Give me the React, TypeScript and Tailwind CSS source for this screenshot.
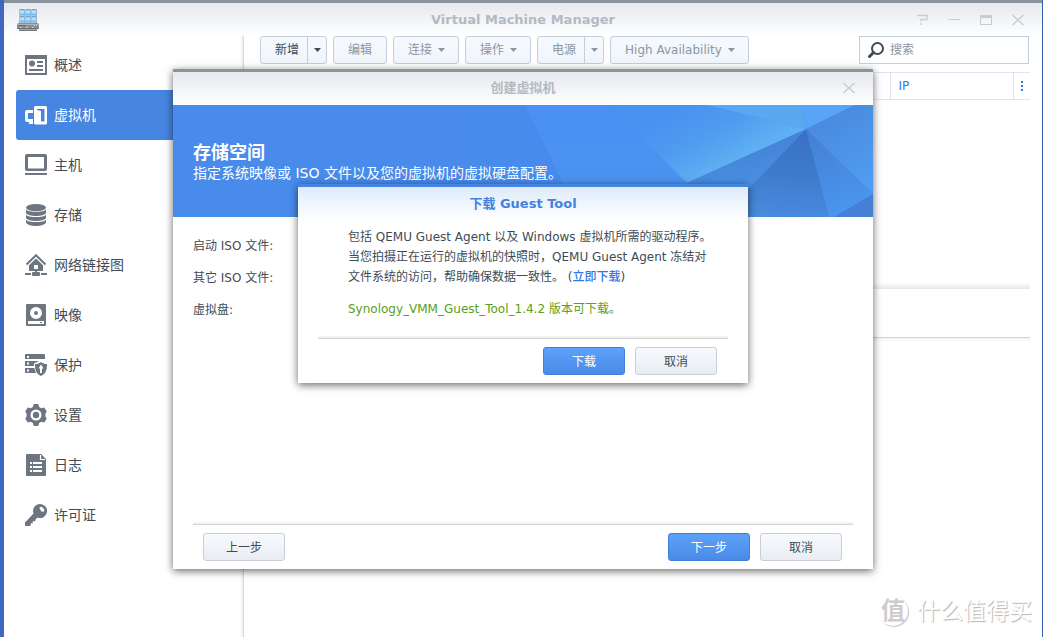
import { useState } from 'react';
import type { ReactNode } from 'react';

type NavItem = {
  label: string;
  icon: ReactNode;
};

const navItems: NavItem[] = [
  {
    label: '概述',
    icon: (
      <>
        <path fillRule="evenodd" d="M0 1h22v20H0zM2 5v14h18V5z" />
        <circle cx="7" cy="9.500" r="3" />
        <path d="M12 7h6v2h-6zM12 11h6v2h-6zM4 15h14v2H4z" />
      </>
    ),
  },
  {
    label: '虚拟机',
    icon: (
      <>
        <path d="M2 6h6v3H3v6h5v3H2a2 2 0 0 1-2-2V8a2 2 0 0 1 2-2zM4 18h4v2H4z" />
        <path
          fillRule="evenodd"
          d="M10.500 2H20.500a1.500 1.500 0 0 1 1.500 1.500V19a1.500 1.500 0 0 1-1.500 1.500H10.500A1.500 1.500 0 0 1 9 19V3.500A1.500 1.500 0 0 1 10.500 2zM12 5v1l4 1v10.500h3.500V5z"
        />
      </>
    ),
  },
  {
    label: '主机',
    icon: (
      <path
        fillRule="evenodd"
        d="M2 0h18a2 2 0 0 1 2 2v13a2 2 0 0 1-2 2H2a2 2 0 0 1-2-2V2a2 2 0 0 1 2-2zM3 3v11.500h16V3zM0 19h22v2H0z"
      />
    ),
  },
  {
    label: '存储',
    icon: (
      <>
        <ellipse cx="11" cy="3.600" rx="10" ry="3.600" />
        <path d="M1 5.500c2 3.200 18 3.200 20 0V9c-1.500 4-18.500 4-20 0z" />
        <path d="M1 10.700c2 3.200 18 3.200 20 0V14c-1.500 4-18.500 4-20 0z" />
        <path d="M1 15.700c2 3.200 18 3.200 20 0v2.500c-1.500 5-18.500 5-20 0z" />
      </>
    ),
  },
  {
    label: '网络链接图',
    icon: (
      <>
        <path d="M1.500 10.500 11 1.200l9.500 9.300" fill="none" stroke="currentColor" strokeWidth="2" />
        <path fillRule="evenodd" d="M11 4.500 18 11.300V17H4v-5.700zM9 11v4h4v-4z" />
        <path d="M0 19h6v2H0zM16 19h6v2h-6zM8 18h6a1 1 0 0 1 1 1v2a1 1 0 0 1-1 1H8a1 1 0 0 1-1-1v-2a1 1 0 0 1 1-1z" />
        <path d="M10 16h2v3h-2z" />
      </>
    ),
  },
  {
    label: '映像',
    icon: (
      <>
        <path
          fillRule="evenodd"
          d="M2 0h18a1 1 0 0 1 1 1v20a1 1 0 0 1-1 1H2a1 1 0 0 1-1-1V1a1 1 0 0 1 1-1zM11 3a6 6 0 1 0 0 12 6 6 0 0 0 0-12zM3 17v3h16v-3z"
        />
        <circle cx="11" cy="9" r="2" />
        <path d="M15 18h2v1h-2z" />
      </>
    ),
  },
  {
    label: '保护',
    icon: (
      <>
        <path
          fillRule="evenodd"
          d="M1 0h18a1 1 0 0 1 1 1v4H0V1a1 1 0 0 1 1-1zM2 2v2h2V2zM0 7h14l-5 2.500V12H0zM2 8.500v2h2v-2zM0 14h9.300l1.700 5H1a1 1 0 0 1-1-1zM2 15.500v2h2v-2z"
        />
        <path
          fillRule="evenodd"
          d="M16 8c2 1.500 4 2 6 2 0 6-1 9.500-6 12-5-2.500-6-6-6-12 2 0 4-.5 6-2zM16 10.500l-2.500 4H15V19h2v-4.500h1.500z"
        />
      </>
    ),
  },
  {
    label: '设置',
    icon: (
      <>
        <path
          fillRule="evenodd"
          strokeLinejoin="round"
          d="M8.700 0h4.600l.8 2.900 2.300 1.300 2.900-.8L21.800 7.500 20.400 9.600v2.800l1.400 2.100-2.500 4.100-2.900-.8-2.300 1.300-.8 2.900H8.700l-.8-2.900-2.300-1.300-2.900.8L.2 14.500l1.400-2.100V9.600L.2 7.500l2.500-4.100 2.900.8 2.300-1.300zM11 5.500a5.500 5.500 0 1 0 0 11 5.500 5.500 0 0 0 0-11z"
        />
        <circle cx="11" cy="11" r="3.200" />
      </>
    ),
  },
  {
    label: '日志',
    icon: (
      <>
        <path
          fillRule="evenodd"
          d="M2 0h14l5 5v16a1 1 0 0 1-1 1H2a1 1 0 0 1-1-1V1a1 1 0 0 1 1-1zM5 8v2h2V8zM8 8v2h9V8zM5 12v2h2v-2zM8 12v2h9v-2zM5 16v2h2v-2zM8 16v2h9v-2z"
        />
        <path d="M15.500 1v4.500H20" fill="none" stroke="#fff" strokeWidth="1.200" />
      </>
    ),
  },
  {
    label: '许可证',
    icon: (
      <path
        fillRule="evenodd"
        d="M15 0a7 7 0 1 1-2.500 13.500L10.500 15.500l-.5 2-1.500-.5-1 1 .5 1.500-1.500-.5-1 1 .5 1-1.200 1H0v-3.500L8.500 9.500A7 7 0 0 1 15 0zM14.500 4.500a1.800 1.800 0 0 1 2.500-1.500l2 2a1.800 1.800 0 0 1-2.500 2.500z"
      />
    ),
  },
];

function Caret() {
  return (
    <svg className="h-1 w-[7px]" viewBox="0 0 7 4" fill="currentColor" aria-hidden="true">
      <path d="M0 0h7L3.500 4z" />
    </svg>
  );
}

function CloseIcon() {
  return (
    <svg className="size-3" viewBox="0 0 12 12" fill="none" stroke="currentColor" strokeWidth="1.500" aria-hidden="true">
      <path d="M.5 1l11 10M11.500 1l-11 10" />
    </svg>
  );
}

function AppLogo() {
  return (
    <svg className="h-6 w-[22px]" viewBox="0 0 22 24" aria-hidden="true">
      <path d="M2 1h18v16H2z" fill="#9cc8ec" />
      {[2, 8, 14].map((x) => (
        <g key={x}>
          <path d={`M${x + 1} 1h4v1h-4zM${x + 1} 8h4v1h-4z`} fill="#7fa3c8" />
          <path d={`M${x + 1} 3h4v2h-4zM${x + 1} 10h4v2h-4z`} fill="#b4e2f8" />
          <path d={`M${x + 5} 2h1v14h-1z`} fill="#86b9e4" />
          <path d={`M${x} 6h6v1H${x}zM${x} 13h6v1H${x}z`} fill="#86b9e4" />
        </g>
      ))}
      <path d="M1 15h20l1 2v4H0v-4z" fill="#8c8e90" />
      <path d="M1 16h20v1H1z" fill="#b0b2b4" />
      <path d="M1 17h8v1H1zM1 20h20v1H1z" fill="#68696b" />
      <path d="M17 17h1v1h-1zM19 17h1v1h-1z" fill="#d5d94a" />
      <path d="M3 19h2v1H3zM9 19h2v1H9zM15 19h2v1h-2z" fill="#c8cacc" />
      <path d="M2 21h18v2H2z" fill="#a4a6a9" />
      <path d="M2 22h18v1H2z" fill="#76787b" />
    </svg>
  );
}

function BannerArt() {
  return (
    <svg
      className="absolute inset-0 size-full"
      viewBox="0 0 700 112"
      preserveAspectRatio="xMaxYMid slice"
      aria-hidden="true"
    >
      <defs>
        <linearGradient id="fadeIn" x1="0" x2="1" y1="0" y2="0">
          <stop offset="0" stopColor="#488bea" />
          <stop offset="1" stopColor="#478bf0" />
        </linearGradient>
        <linearGradient id="panel" x1="0" x2="0" y1="0" y2="1">
          <stop offset="0" stopColor="#4a90f6" />
          <stop offset="1" stopColor="#4c94ec" />
        </linearGradient>
        <linearGradient id="glow" gradientUnits="userSpaceOnUse" x1="520" x2="560" y1="-10" y2="66">
          <stop offset="0.100" stopColor="#4a92f0" />
          <stop offset="0.500" stopColor="#509cf0" />
          <stop offset="1" stopColor="#62b4f3" />
        </linearGradient>
        <linearGradient id="top" x1="0" x2="1" y1="0" y2="0">
          <stop offset="0" stopColor="#5aa6f8" />
          <stop offset="1" stopColor="#5aa9ec" />
        </linearGradient>
        <linearGradient id="right" x1="0" x2="0.500" y1="0" y2="1">
          <stop offset="0" stopColor="#4787da" />
          <stop offset="1" stopColor="#509aef" />
        </linearGradient>
        <linearGradient id="lower" x1="0" x2="0.300" y1="0" y2="1">
          <stop offset="0" stopColor="#437fd0" />
          <stop offset="1" stopColor="#4b94ee" />
        </linearGradient>
        <linearGradient id="dark" x1="0.500" x2="0.400" y1="0" y2="1">
          <stop offset="0" stopColor="#3a70c4" />
          <stop offset="0.500" stopColor="#3f7bcd" />
          <stop offset="1" stopColor="#498bde" />
        </linearGradient>
        <linearGradient id="mid" x1="0.500" x2="0.800" y1="0.300" y2="1">
          <stop offset="0" stopColor="#4484d9" />
          <stop offset="1" stopColor="#509aea" />
        </linearGradient>
      </defs>
      <path d="M0 0h700v112H0z" fill="#488bea" />
      <path d="M290 0h62l55 112H290z" fill="url(#fadeIn)" />
      <path d="M352 0h84l78 78-75 34h-32z" fill="url(#panel)" />
      <path d="M436 0h98l99 24-119 54z" fill="url(#glow)" />
      <path d="M534 0h93l6 24z" fill="url(#top)" />
      <path d="M627 0h55l-49 24z" fill="#58a4f6" />
      <path d="M682 0h18v89l-67-65z" fill="url(#right)" />
      <path d="M633 24l67 65-39 23h-5z" fill="url(#lower)" />
      <path d="M700 89v23h-39z" fill="#4480d4" />
      <path d="M633 24l23 88H548z" fill="url(#dark)" />
      <path d="M633 24l-85 88H439l75-34z" fill="url(#mid)" />
    </svg>
  );
}

function ToolButton({ label, menu = false }: { label: string; menu?: boolean }) {
  return (
    <button
      type="button"
      className={`flex h-7 items-center gap-1.5 rounded-[3px] border border-[#c3cfdd] bg-linear-to-b from-[#f6fafe] to-[#f0f5fb] pl-3.5 text-[#8d959f] ${
        menu ? 'pr-[13px]' : 'pr-3.5'
      }`}
    >
      {label}
      {menu && <Caret />}
    </button>
  );
}

function SplitButton({ label, strong = false }: { label: string; strong?: boolean }) {
  return (
    <div
      className={`flex h-7 rounded-[3px] border border-[#c3cfdd] bg-linear-to-b from-[#f6fafe] to-[#f0f5fb] ${
        strong ? 'text-[#414b55]' : 'text-[#8d959f]'
      }`}
    >
      <button type="button" className="pr-2 pl-3.5">
        {label}
      </button>
      <button
        type="button"
        aria-label={`${label}菜单`}
        className="flex w-[19px] items-center justify-center border-l border-[#c3cfdd]"
      >
        <Caret />
      </button>
    </div>
  );
}

function DialogButton({ label, primary = false, onClick }: { label: string; primary?: boolean; onClick?: () => void }) {
  return (
    <button
      type="button"
      onClick={onClick}
      className={`h-7 w-[82px] rounded-[3px] border pt-0.5 ${
        primary
          ? 'border-[#3f7fd6] bg-linear-to-b from-[#5ca2fa] to-[#4a8ae6] text-white'
          : 'border-[#c5ced9] bg-linear-to-b from-[#f7fbff] to-[#e9edf3] text-[#414b55]'
      }`}
    >
      {label}
    </button>
  );
}

function Divider() {
  return <div className="h-1 border-b border-[#d4d4d4] bg-linear-to-b from-white to-[#ececec]" />;
}

function GuestToolDialog({ onClose }: { onClose: () => void }) {
  return (
    <div
      role="dialog"
      aria-labelledby="guest-title"
      className="w-full max-w-[450px] border-t-3 border-[#4584e0] bg-white shadow-[0_2px_8px_rgba(0,0,0,0.6)]"
    >
      <h2
        id="guest-title"
        className="h-[33px] bg-linear-to-b from-[#deebfa] to-white text-center text-[13px] leading-[33px] font-bold text-[#4382de]"
      >
        下载 Guest Tool
      </h2>
      <div className="px-5">
        <div className="px-[30px] pt-[7px] pb-4 leading-5">
          <p className="whitespace-nowrap">
            包括 QEMU Guest Agent 以及 Windows 虚拟机所需的驱动程序。
            <br />
            当您拍摄正在运行的虚拟机的快照时，QEMU Guest Agent 冻结对
            <br />
            文件系统的访问，帮助确保数据一致性。 (
            <a href="#download" className="font-medium text-[#3078e4]">
              立即下载
            </a>
            )
          </p>
          <p className="mt-3 text-[#58a020]">Synology_VMM_Guest_Tool_1.4.2 版本可下载。</p>
        </div>
        <Divider />
        <div className="flex justify-end gap-2.5 px-[11px] py-2">
          <DialogButton label="下载" primary />
          <DialogButton label="取消" onClick={onClose} />
        </div>
      </div>
    </div>
  );
}

function CreateDialog() {
  const [guestOpen, setGuestOpen] = useState(true);

  return (
    <div
      role="dialog"
      aria-labelledby="create-title"
      className="relative flex min-h-[500px] w-full max-w-[700px] flex-col border-t-3 border-[#8b939c] bg-white shadow-[0_2px_8px_rgba(0,0,0,0.6)]"
    >
      <div className="grid h-[33px] grid-cols-[1fr_auto_1fr] items-center bg-linear-to-b from-[#e5e8ee] to-white px-[18px]">
        <span />
        <h2 id="create-title" className="text-[13px] font-bold text-[#b3bac2]">
          创建虚拟机
        </h2>
        <button type="button" aria-label="关闭" className="justify-self-end text-[#c9cdd2]">
          <CloseIcon />
        </button>
      </div>

      <div className="relative h-28 text-white">
        <BannerArt />
        <div className="relative px-5 pt-9">
          <h3 className="text-lg leading-6 font-bold">存储空间</h3>
          <p className="text-sm leading-4">指定系统映像或 ISO 文件以及您的虚拟机的虚拟硬盘配置。</p>
        </div>
      </div>

      <div className="flex-1 px-5 pt-[13px] leading-8">
        <p>启动 ISO 文件:</p>
        <p>其它 ISO 文件:</p>
        <p>虚拟盘:</p>
      </div>

      <div className="px-5">
        <Divider />
        <div className="flex gap-2.5 py-2 pr-[11px] pl-2.5">
          <DialogButton label="上一步" />
          <span className="flex-1" />
          <DialogButton label="下一步" primary />
          <DialogButton label="取消" />
        </div>
      </div>

      {guestOpen && (
        <div className="absolute inset-x-0 top-28 flex justify-center">
          <GuestToolDialog onClose={() => setGuestOpen(false)} />
        </div>
      )}
    </div>
  );
}

function Sidebar({ active, onSelect }: { active: string; onSelect: (label: string) => void }) {
  return (
    <div className="flex w-60 shrink-0">
      <nav className="flex-1 pt-1 pr-1.5 pl-3">
        {navItems.map((item) => (
          <button
            key={item.label}
            type="button"
            onClick={() => onSelect(item.label)}
            className={`flex h-[50px] w-full items-center gap-[7px] rounded-[3px] pl-[9px] text-sm ${
              item.label === active ? 'bg-[#4686e0] text-white' : 'text-[#414b55]'
            }`}
          >
            <svg
              className={`size-[22px] ${item.label === active ? 'text-white' : 'text-[#6d7580]'}`}
              viewBox="0 0 22 22"
              fill="currentColor"
              aria-hidden="true"
            >
              {item.icon}
            </svg>
            {item.label}
          </button>
        ))}
      </nav>
      <div className="w-1 border-r border-[#d8d8d8] bg-linear-to-r from-white to-[#eeeeee]" />
    </div>
  );
}

export default function App() {
  const [active, setActive] = useState('虚拟机');
  const [query, setQuery] = useState('');

  return (
    <div className="relative flex min-h-screen flex-col border-r border-l-4 border-r-[#2f5fa8] border-l-[#4068c0] bg-white font-['DejaVu_Sans','Noto_Sans_CJK_SC',sans-serif] text-xs text-[#414b55]">
      <header className="grid h-9 grid-cols-[1fr_auto_1fr] items-center border-t-3 border-[#8b939c] bg-linear-to-b from-[#e5e8ee] to-white px-[13px]">
        <AppLogo />
        <h1 className="text-[13px] font-bold text-[#b3bac2]">Virtual Machine Manager</h1>
        <div className="flex gap-5 justify-self-end pr-[5px] text-[#c9cdd2]">
          <button type="button" aria-label="帮助">
            <svg className="size-3" viewBox="0 0 12 12" fill="none" stroke="currentColor" strokeWidth="1.500" aria-hidden="true">
              <path d="M1 1.500h10v4H5v2M5 9v2" />
            </svg>
          </button>
          <button type="button" aria-label="最小化">
            <svg className="size-3" viewBox="0 0 12 12" fill="currentColor" aria-hidden="true">
              <path d="M0 5h12v1H0z" />
            </svg>
          </button>
          <button type="button" aria-label="最大化">
            <svg className="size-3" viewBox="0 0 12 12" fill="currentColor" aria-hidden="true">
              <path fillRule="evenodd" d="M0 1h12v10H0zM1 4v6h10V4z" />
            </svg>
          </button>
          <button type="button" aria-label="关闭">
            <CloseIcon />
          </button>
        </div>
      </header>

      <div className="flex flex-1">
        <Sidebar active={active} onSelect={setActive} />

        <main className="min-w-0 flex-1 pr-3 pl-4">
          <div className="flex items-center gap-1.5 pr-px">
            <SplitButton label="新增" strong />
            <ToolButton label="编辑" />
            <ToolButton label="连接" menu />
            <ToolButton label="操作" menu />
            <SplitButton label="电源" />
            <ToolButton label="High Availability" menu />
            <label className="ml-auto flex h-7 w-[170px] items-center gap-1.5 border border-[#c3cfdd] bg-white pl-2">
              <svg className="size-4 shrink-0" viewBox="0 0 16 16" fill="none" stroke="#414b55" aria-hidden="true">
                <circle cx="9.500" cy="6.500" r="5.500" strokeWidth="2" />
                <path d="M5.500 10.500L1.500 14.500" strokeWidth="3" strokeLinecap="round" />
              </svg>
              <input
                type="text"
                aria-label="搜索"
                placeholder="搜索"
                value={query}
                onChange={(e) => setQuery(e.target.value)}
                className="w-full min-w-0 outline-none placeholder:text-[#8d959f]"
              />
            </label>
          </div>

          <div className="mt-2 flex h-[217px] flex-col justify-between">
            <table className="w-full border-y border-[#dde5f0] text-left text-[#3078e4]">
              <thead>
                <tr className="h-[27px]">
                  <th className="font-normal" aria-label="名称" />
                  <th className="w-[123px] border-l border-[#dde5f0] pl-2 font-normal">IP</th>
                  <th className="w-[17px] border-l border-[#dde5f0]">
                    <button type="button" aria-label="列选项" className="flex w-full justify-center">
                      <svg className="h-2.5 w-0.5" viewBox="0 0 2 10" fill="currentColor" aria-hidden="true">
                        <path d="M0 0h2v2H0zM0 4h2v2H0zM0 8h2v2H0z" />
                      </svg>
                    </button>
                  </th>
                </tr>
              </thead>
            </table>
            <div className="h-1.5 bg-linear-to-b from-white to-[#e6e6e6]" />
          </div>
          <div className="h-[49px] border-b border-[#d2d2d2]" />
          <div className="h-1 bg-linear-to-b from-[#f3f3f3] to-white" />
        </main>
      </div>

      <div className="absolute inset-0 flex items-center justify-center">
        <CreateDialog />
      </div>

      <div className="absolute right-2.5 bottom-2.5 flex items-center gap-[9px] text-white">
        <span className="flex size-[30px] items-center justify-center rounded-full text-2xl font-bold text-[#cccccc] shadow-[1px_1px_1px_#c4c4c4]">
          值
        </span>
        <span className="text-[23px] leading-8 text-shadow-[1px_1px_1px_#b4b4b4]">什么值得买</span>
      </div>
    </div>
  );
}
